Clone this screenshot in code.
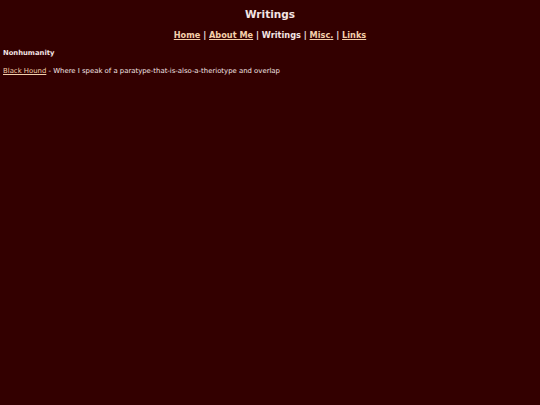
export default function App() {
  return (
    <div className="min-h-[405px] bg-[#330000] text-[#f4e4e4] font-['DejaVu_Sans',sans-serif] px-[3px] pt-[8px]">
      <h1 className="text-center font-bold text-[10.5px] leading-[13px]">Writings</h1>
      <nav className="text-center font-bold text-[8.2px] leading-[10px] mt-[9px]">
        <a href="#" className="underline text-[#f3cfaa]">Home</a> |{' '}
        <a href="#" className="underline text-[#f3cfaa]">About Me</a> | Writings |{' '}
        <a href="#" className="underline text-[#f3cfaa]">Misc.</a> |{' '}
        <a href="#" className="underline text-[#f3cfaa]">Links</a>
      </nav>
      <h2 className="font-bold text-[6.8px] leading-[8px] mt-[9px]">Nonhumanity</h2>
      <p className="text-[6.9px] leading-[8px] mt-[10px]">
        <a href="#" className="underline text-[#f3cfaa]">Black Hound</a> - Where I speak of a paratype-that-is-also-a-theriotype and overlap
      </p>
    </div>
  );
}
